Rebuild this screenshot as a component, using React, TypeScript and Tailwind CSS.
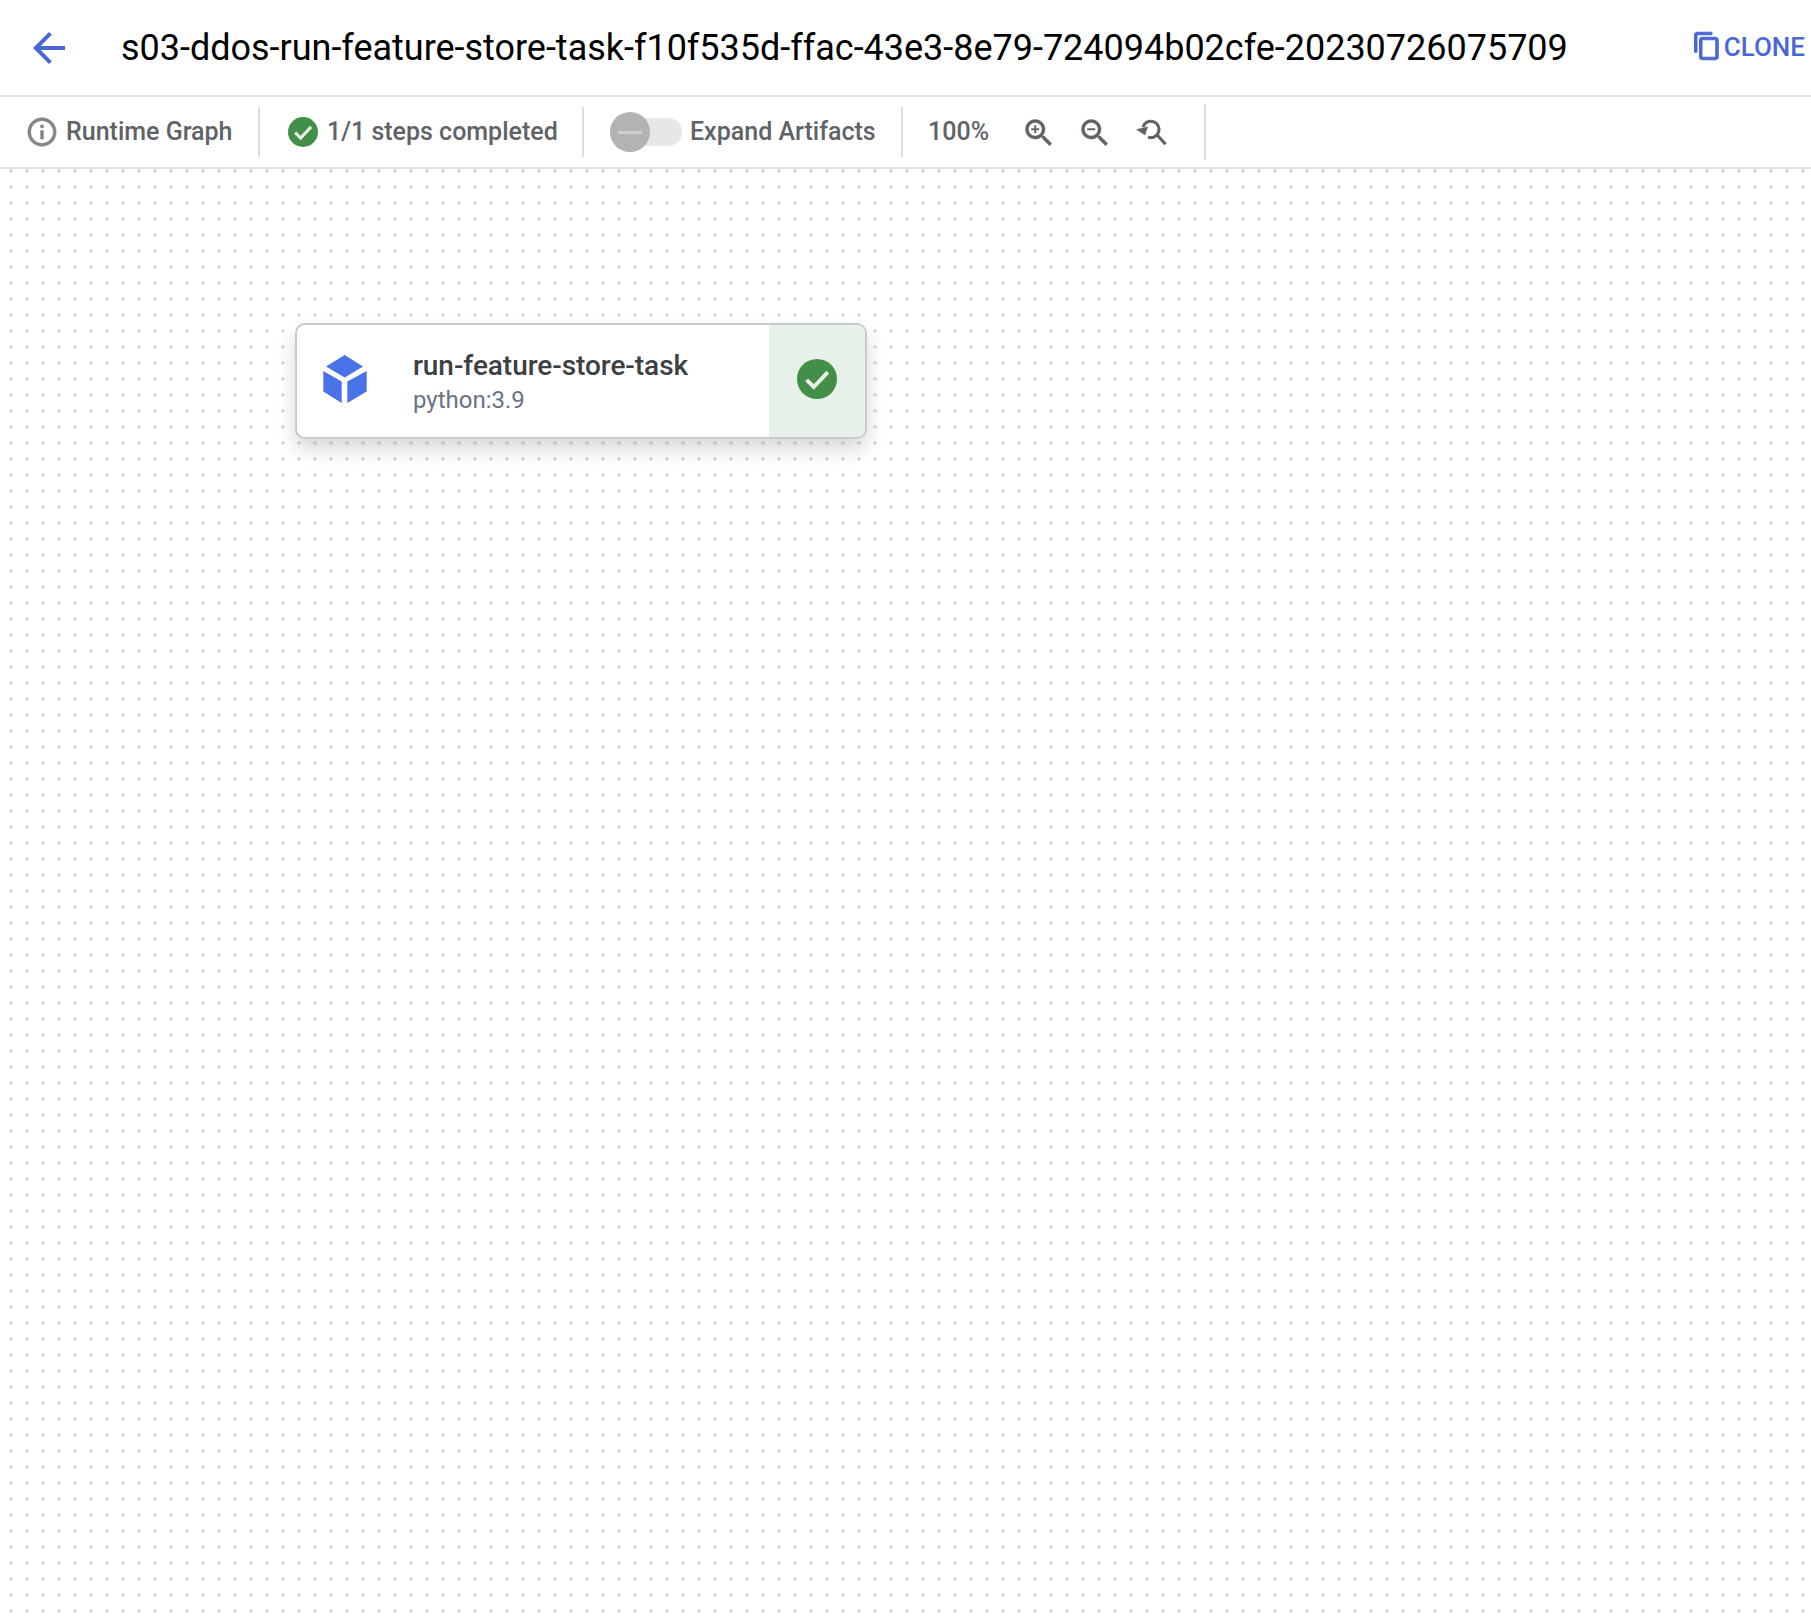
const zoomGlass =
  'M15.5 14h-.79l-.28-.27C15.41 12.59 16 11.11 16 9.5 16 5.91 13.09 3 9.5 3S3 5.91 3 9.5 5.91 16 9.5 16c1.61 0 3.09-.59 4.23-1.57l.27.28v.79l5 4.99L20.49 19l-4.99-5zm-6 0C7.01 14 5 11.99 5 9.5S7.01 5 9.5 5 14 7.01 14 9.5 11.99 14 9.5 14z';

const CheckCircle = ({ className }: { className: string }) => (
  <svg viewBox="0 0 24 24" className={className}>
    <circle cx="12" cy="12" r="10" fill="#438f48" />
    <path d="M6.8 12.4l3.6 3.6 7-7.4" fill="none" stroke="#e8f1e8" strokeWidth="2" />
  </svg>
);

const Divider = ({ tall }: { tall?: boolean }) => (
  <div className={tall ? 'h-[56px] w-[2px] bg-[#dadce0]' : 'h-[50px] w-[2px] bg-[#dadce0]'} />
);

const ZoomIcon = ({ d }: { d: string }) => (
  <svg viewBox="0 0 24 24" className="h-[36px] w-[36px] shrink-0" fill="#5f6368" stroke="#5f6368" strokeWidth="0.3">
    <path d={zoomGlass} />
    <path d={d} />
  </svg>
);

export default function App() {
  return (
    <div className="flex h-[1621px] w-[1811px] flex-col overflow-hidden bg-white font-['Roboto',sans-serif]">
      <header className="flex h-[97px] shrink-0 items-center border-b-2 border-[#e0e0e0] pl-[25px] pr-[6px]">
        <svg viewBox="0 0 24 24" className="h-[48px] w-[48px] shrink-0" fill="#4a67d6">
          <path d="M20 11H7.83l5.59-5.59L12 4l-8 8 8 8 1.41-1.41L7.83 13H20v-2z" />
        </svg>
        <h1 className="ml-[48px] text-[36px] font-normal leading-none tracking-[-0.015px] text-black">
          s03-ddos-run-feature-store-task-f10f535d-ffac-43e3-8e79-724094b02cfe-20230726075709
        </h1>
        <div className="ml-auto flex items-center gap-[2px] text-[26px] font-medium text-[#4a67d6]">
          <svg viewBox="0 0 24 24" className="mb-[3px] h-[30px] w-[30px] shrink-0" fill="#4a67d6" stroke="#4a67d6" strokeWidth="0.8">
            <path d="M16 1H4c-1.1 0-2 .9-2 2v14h2V3h12V1zm3 4H8c-1.1 0-2 .9-2 2v14c0 1.1.9 2 2 2h11c1.1 0 2-.9 2-2V7c0-1.1-.9-2-2-2zm0 16H8V7h11v14z" />
          </svg>
          CLONE
        </div>
      </header>

      <div className="flex h-[72px] shrink-0 items-center border-b-2 border-[#e0e0e0] text-[25px] font-medium text-[#5f6368]">
        <div className="flex w-[258px] items-center pl-[25px]">
          <svg viewBox="0 0 24 24" className="h-[34px] w-[34px] shrink-0" fill="#80868b" stroke="#80868b" strokeWidth="0.4">
            <path d="M11 7h2v2h-2zm0 4h2v6h-2zm1-9C6.48 2 2 6.48 2 12s4.48 10 10 10 10-4.48 10-10S17.52 2 12 2zm0 18c-4.41 0-8-3.59-8-8s3.59-8 8-8 8 3.59 8 8-3.59 8-8 8z" />
          </svg>
          <span className="ml-[7px]">Runtime Graph</span>
        </div>
        <Divider />
        <div className="flex w-[322px] items-center pl-[25px]">
          <CheckCircle className="h-[36px] w-[36px] shrink-0" />
          <span className="ml-[6px]">1/1 steps completed</span>
        </div>
        <Divider />
        <div className="flex w-[317px] items-center pl-[26px]">
          <div className="relative h-[28px] w-[72px] shrink-0 rounded-full bg-[#e6e6e6]">
            <div className="absolute left-0 top-[-6px] flex h-[40px] w-[40px] items-center justify-center rounded-full bg-[#b3b3b3]">
              <div className="h-[3px] w-[24px] bg-[#d0d0d0]" />
            </div>
          </div>
          <span className="ml-[8px]">Expand Artifacts</span>
        </div>
        <Divider />
        <div className="flex w-[301px] items-center pl-[25px]">
          <span className="w-[93px]">100%</span>
          <div className="flex gap-[20px] pt-[2px]">
            <ZoomIcon d="M12 10h-2v2H9v-2H7V9h2V7h1v2h2v1z" />
            <ZoomIcon d="M7 9h5v1H7z" />
            <svg viewBox="0 0 24 24" className="h-[36px] w-[36px] shrink-0" fill="none" stroke="#5f6368">
              <path d="M6.6 8A5.5 5.5 0 1 1 10 14.8" strokeWidth="2" />
              <path d="M16.1 13.3L21.7 19.5" strokeWidth="2.1" />
              <path d="M2.4 9.7L9.8 7.8 8 13.4z" fill="#5f6368" strokeWidth="0.3" />
            </svg>
          </div>
        </div>
        <Divider tall />
      </div>

      <main className="relative flex-1 bg-[radial-gradient(circle,#e0e0e0_1.6px,transparent_2px)] bg-[length:16px_16px] bg-[position:3px_-6px]">
        <div className="absolute left-[295px] top-[154px] flex h-[116px] w-[572px] overflow-hidden rounded-[10px] border-2 border-[#c6cccb] bg-white shadow-[0_10px_20px_rgba(0,0,0,0.16)]">
          <svg viewBox="0 0 44 48" className="ml-[26px] mt-[30px] h-[48px] w-[44px] shrink-0" fill="#4a72e8">
            <path d="M21.7 0L40 11.5 21.7 22.5 3 11.5z" />
            <path d="M0.3 16L18.7 26.5V48L0.3 36.5z" />
            <path d="M43.7 16L24.3 26.5V48L43.7 36.5z" />
          </svg>
          <div className="ml-[46px] flex flex-1 flex-col pt-[24px]">
            <div className="text-[28px] font-medium leading-[34px] tracking-[-0.05px] text-[#3c4043]">run-feature-store-task</div>
            <div className="text-[24px] leading-[34px] text-[#6b7280]">python:3.9</div>
          </div>
          <div className="flex w-[96px] shrink-0 items-center justify-center bg-[#e7f1e9] pb-[4px]">
            <CheckCircle className="h-[48px] w-[48px]" />
          </div>
        </div>
      </main>
    </div>
  );
}
